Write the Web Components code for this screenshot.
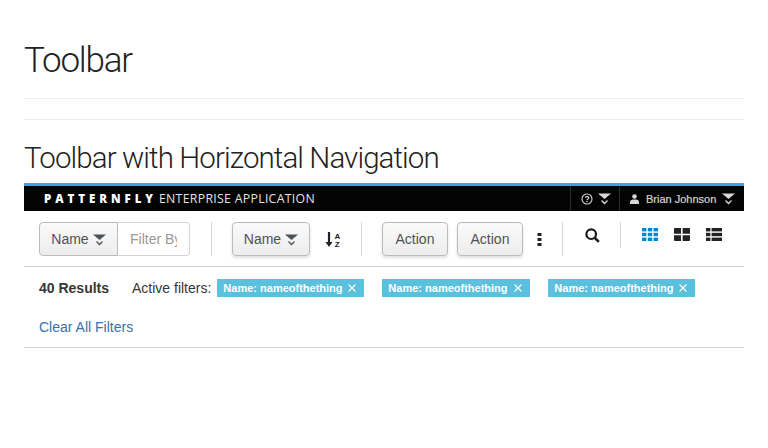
<!DOCTYPE html>
<html>
<head>
<meta charset="utf-8">
<title>Toolbar</title>
<style>
  html, body { margin: 0; padding: 0; background: #fff; }
  body { font-family: "Liberation Sans", Arial, sans-serif; color: #363636; }
</style>
</head>
<body>
<toolbar-page></toolbar-page>

<script>
const CARET = `<svg width="13" height="12" viewBox="0 0 13 12"><path d="M0 0.5h13L6.5 6z" fill="currentColor"/><path d="M3.5 7.5l3 3 3-3" fill="none" stroke="currentColor" stroke-width="1.3"/></svg>`;

class PageHeading extends HTMLElement {
  constructor() {
    super();
    this.attachShadow({mode: 'open'}).innerHTML = `
    <style>
      :host { display: block; font-family: Roboto, "Liberation Sans", sans-serif; font-weight: 300; color: #222; white-space: nowrap; }
      :host([level="1"]) { font-size: 35px; line-height: 42px; letter-spacing: -1.2px; }
      :host([level="2"]) { font-size: 29.5px; line-height: 36px; letter-spacing: -0.9px; }
    </style>
    <slot></slot>`;
  }
}
customElements.define('page-heading', PageHeading);

class AppNavbar extends HTMLElement {
  constructor() {
    super();
    this.attachShadow({mode: 'open'}).innerHTML = `
    <style>
      :host { display: flex; height: 25px; background: #030303; border-top: 3px solid #39a5dc; color: #fff; align-items: stretch; }
      .brand { flex: 1; display: flex; align-items: center; padding-left: 20px; white-space: nowrap; font-family: "Open Sans", sans-serif; }
      .brand b { font-weight: 800; font-size: 11.5px; letter-spacing: 3.95px; margin-right: 2px; }
      .brand span { color: #e4e4e4; font-weight: 400; font-size: 12.3px; letter-spacing: 0.3px; }
      .item { display: flex; align-items: center; border-left: 1px solid #2b2b2b; color: #d8d8d8; }
      .help { width: 49px; padding-left: 10px; box-sizing: border-box; gap: 5px; }
      .user { width: 125px; padding-left: 10px; box-sizing: border-box; font-size: 11px; }
      .user .name { margin: 0 6px 0 7px; color: #d5d5d5; -webkit-text-stroke: 0.2px #d5d5d5; }
      svg { display: block; }
    </style>
    <div class="brand"><b>PATTERNFLY</b><span>ENTERPRISE APPLICATION</span></div>
    <div class="item help">
      <svg width="12" height="12" viewBox="0 0 12 12"><circle cx="6" cy="6" r="5" fill="none" stroke="currentColor" stroke-width="1.1"/><path d="M4.3 4.8C4.4 3.2 7.8 3.2 7.8 4.9 7.8 6 6 6 6 7.2" fill="none" stroke="currentColor" stroke-width="1.1"/><rect x="5.4" y="8" width="1.2" height="1.2" fill="currentColor"/></svg>
      ${CARET}
    </div>
    <div class="item user">
      <svg width="9" height="10" viewBox="0 0 9 10"><circle cx="4.5" cy="2.5" r="2.3" fill="currentColor"/><path d="M0 10V7.6C0 6 2 5.4 4.5 5.4S9 6 9 7.6V10z" fill="currentColor"/></svg>
      <span class="name">Brian Johnson</span>
      ${CARET}
    </div>`;
  }
}
customElements.define('app-navbar', AppNavbar);

class PfButton extends HTMLElement {
  constructor() {
    super();
    this.attachShadow({mode: 'open'}).innerHTML = `
    <style>
      :host { display: inline-flex; box-sizing: border-box; height: 34px; align-items: center; justify-content: center; gap: 4px;
        border: 1px solid #bbb; border-radius: 4px; background: linear-gradient(#fafafa, #ededed); color: #4d5258;
        font-size: 14px; box-shadow: 0 2px 3px rgba(0,0,0,.12); }
      :host([flat]) { box-shadow: none; border-radius: 4px 0 0 4px; }
      ::slotted(svg) { display: block; margin-top: 2px; }
    </style>
    <slot></slot>`;
  }
}
customElements.define('pf-button', PfButton);

class FilterInput extends HTMLElement {
  constructor() {
    super();
    this.attachShadow({mode: 'open'}).innerHTML = `
    <style>
      :host { display: flex; width: 151px; height: 34px; }
      pf-button { width: 79px; flex: none; }
      .field { flex: 1; min-width: 0; box-sizing: border-box; border: 1px solid #d4d4d4; border-left: 0; border-radius: 0 4px 4px 0;
        padding: 0 0 0 12px; display: flex; align-items: center; color: #999; font-size: 14px; overflow: hidden; white-space: nowrap; }
      .clip { width: 47px; overflow: hidden; }
    </style>
    <pf-button flat>Name ${CARET}</pf-button>
    <div class="field"><div class="clip">Filter By</div></div>`;
  }
}
customElements.define('filter-input', FilterInput);

class ToolDivider extends HTMLElement {
  constructor() {
    super();
    this.attachShadow({mode: 'open'}).innerHTML = `
    <style>
      :host { display: block; width: 1px; height: 34px; background: #d6d6d6; flex: none; }
      :host([short]) { height: 26px; }
    </style>`;
  }
}
customElements.define('tool-divider', ToolDivider);

class MainToolbar extends HTMLElement {
  constructor() {
    super();
    this.attachShadow({mode: 'open'}).innerHTML = `
    <style>
      :host { display: flex; box-sizing: border-box; height: 56px; padding: 11px 0 0 15px; align-items: flex-start;
        border-bottom: 1px solid #d1d1d1; color: #222; }
      svg { display: block; flex: none; }
      filter-input { margin-right: 21px; }
      .sort-btn { width: 78px; margin-left: 20px; }
      .sort { margin: 9px 0 0 15px; }
      .d2 { margin-left: 19px; }
      .act { width: 66px; margin-left: 9px; }
      .act.first { margin-left: 20px; }
      .kebab { margin: 11px 0 0 14px; }
      .d3 { margin-left: 20px; }
      .search { margin: 6px 0 0 22px; }
      .d4 { margin-left: 20px; }
      .views { display: flex; gap: 16px; margin: 6px 0 0 21px; }
    </style>
    <filter-input></filter-input>
    <tool-divider></tool-divider>
    <pf-button class="sort-btn">Name ${CARET}</pf-button>
    <svg class="sort" width="17" height="17" viewBox="0 0 17 17">
      <path d="M4 1v12" stroke="#222" stroke-width="2.2" fill="none"/><path d="M0.5 11h7L4 16z" fill="#222"/>
      <text x="9.5" y="7.5" font-family="Liberation Sans" font-size="8" font-weight="700" fill="#222">A</text>
      <text x="9.8" y="15.5" font-family="Liberation Sans" font-size="8" font-weight="700" fill="#222">Z</text>
    </svg>
    <tool-divider class="d2"></tool-divider>
    <pf-button class="act first">Action</pf-button>
    <pf-button class="act">Action</pf-button>
    <svg class="kebab" width="5" height="13" viewBox="0 0 5 13" fill="#222"><rect x="0.5" y="0" width="4" height="3"/><rect x="0.5" y="5" width="4" height="3"/><rect x="0.5" y="10" width="4" height="3"/></svg>
    <tool-divider class="d3"></tool-divider>
    <svg class="search" width="15" height="15" viewBox="0 0 15 15"><circle cx="6.2" cy="6.2" r="4.8" fill="none" stroke="#1a1a1a" stroke-width="2.2"/><path d="M9.8 9.8l4 4" stroke="#1a1a1a" stroke-width="2.6"/></svg>
    <tool-divider class="d4" short></tool-divider>
    <div class="views">
      <svg width="16" height="13" viewBox="0 0 16 13" fill="#0088ce"><rect width="4.4" height="3.4"/><rect x="5.8" width="4.4" height="3.4"/><rect x="11.6" width="4.4" height="3.4"/><rect y="4.8" width="4.4" height="3.4"/><rect x="5.8" y="4.8" width="4.4" height="3.4"/><rect x="11.6" y="4.8" width="4.4" height="3.4"/><rect y="9.6" width="4.4" height="3.4"/><rect x="5.8" y="9.6" width="4.4" height="3.4"/><rect x="11.6" y="9.6" width="4.4" height="3.4"/></svg>
      <svg width="16" height="13" viewBox="0 0 16 13" fill="#222"><path d="M0 1a1 1 0 0 1 1-1h6v5.8H0zM8.6 0H15a1 1 0 0 1 1 1v4.8H8.6zM0 7.2h7V13H1a1 1 0 0 1-1-1zM8.6 7.2H16V12a1 1 0 0 1-1 1H8.6z"/></svg>
      <svg width="16" height="13" viewBox="0 0 16 13" fill="#222"><rect width="4.4" height="3.4"/><rect x="5.6" width="10.4" height="3.4"/><rect y="4.8" width="4.4" height="3.4"/><rect x="5.6" y="4.8" width="10.4" height="3.4"/><rect y="9.6" width="4.4" height="3.4"/><rect x="5.6" y="9.6" width="10.4" height="3.4"/></svg>
    </div>`;
  }
}
customElements.define('main-toolbar', MainToolbar);

class FilterChip extends HTMLElement {
  constructor() {
    super();
    this.attachShadow({mode: 'open'}).innerHTML = `
    <style>
      :host { display: inline-flex; box-sizing: border-box; width: 147px; height: 18px; padding: 0 6px; align-items: center; justify-content: space-between;
        background: #5bc0de; color: #fff; font-size: 11px; font-weight: 700; white-space: nowrap; }
      svg { display: block; margin-top: -1px; margin-right: 2px; }
    </style>
    <slot></slot>
    <svg width="8" height="8" viewBox="0 0 8 8"><path d="M.5.5l7 7M7.5.5l-7 7" stroke="#fff" stroke-width="1.1" fill="none"/></svg>`;
  }
}
customElements.define('filter-chip', FilterChip);

class FilterResults extends HTMLElement {
  constructor() {
    super();
    this.attachShadow({mode: 'open'}).innerHTML = `
    <style>
      :host { display: block; box-sizing: border-box; height: 81px; padding: 12px 0 0 15px; border-bottom: 1px solid #d1d1d1; font-size: 14px; color: #363636; }
      .row { display: flex; align-items: center; height: 18px; white-space: nowrap; }
      b { color: #363636; width: 93px; flex: none; }
      .label { margin-right: 6px; }
      filter-chip { margin-right: 18px; }
      a { display: block; margin-top: 21px; line-height: 18px; color: #3a70b0; text-decoration: none; }
    </style>
    <div class="row">
      <b>40 Results</b>
      <span class="label">Active filters:</span>
      <filter-chip>Name: nameofthething</filter-chip>
      <filter-chip style="width:148px">Name: nameofthething</filter-chip>
      <filter-chip>Name: nameofthething</filter-chip>
    </div>
    <a href="#">Clear All Filters</a>`;
  }
}
customElements.define('filter-results', FilterResults);

class ToolbarPage extends HTMLElement {
  constructor() {
    super();
    this.attachShadow({mode: 'open'}).innerHTML = `
    <style>
      :host { display: block; padding: 40px 24px 0; }
      hr { border: 0; border-top: 1px solid #eee; margin: 0; }
      .one { margin-top: 16px; }
      .two { margin-top: 20px; }
      .h2 { margin-top: 20px; margin-bottom: 7px; }
    </style>
    <page-heading level="1">Toolbar</page-heading>
    <hr class="one">
    <hr class="two">
    <page-heading class="h2" level="2">Toolbar with Horizontal Navigation</page-heading>
    <app-navbar></app-navbar>
    <main-toolbar></main-toolbar>
    <filter-results></filter-results>`;
  }
}
customElements.define('toolbar-page', ToolbarPage);
</script>
</body>
</html>
